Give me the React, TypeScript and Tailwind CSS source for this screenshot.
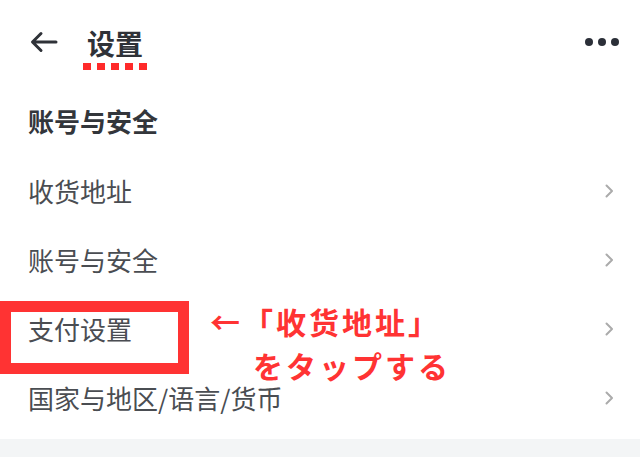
const rows = ["收货地址", "账号与安全", "支付设置", "国家与地区/语言/货币"];

function Chevron() {
  return (
    <svg width="10" height="16" viewBox="0 0 10 16" fill="none">
      <path d="M2.5 2.5l5.5 5.5-5.5 5.5" stroke="#ababab" strokeWidth="2" strokeLinecap="round" strokeLinejoin="round" />
    </svg>
  );
}

export default function App() {
  return (
    <div className="relative flex h-[457px] w-[640px] flex-col overflow-hidden bg-white font-['Noto_Sans_CJK_SC',sans-serif]">
      {/* Header */}
      <div className="flex h-[84px] shrink-0 items-center justify-between pl-[30px] pr-[21px]">
        <div className="flex items-center">
          <svg width="28" height="22" viewBox="0 0 28 22" fill="none">
            <path d="M26 11H3M11 2.5L2.5 11 11 19.5" stroke="#2f3238" strokeWidth="3" strokeLinecap="round" strokeLinejoin="round" />
          </svg>
          <div className="ml-[25px] flex flex-col items-center pt-[12px]">
            <span className="text-[28px] font-bold leading-[32px] text-[#2f3238]">设置</span>
            <div className="mt-[4px] flex gap-[6px]">
              {[0, 1, 2, 3, 4].map((i) => (
                <span key={i} className="h-[7px] w-[8px] bg-[#ff2a2a]" />
              ))}
            </div>
          </div>
        </div>
        <div className="flex gap-[5px]">
          {[0, 1, 2].map((i) => (
            <span key={i} className="h-[8px] w-[8px] rounded-full bg-[#2b2f38]" />
          ))}
        </div>
      </div>

      {/* Section title */}
      <div className="flex h-[72px] shrink-0 items-center pl-[28px]">
        <span className="text-[26px] font-bold text-[#33363b]">账号与安全</span>
      </div>

      {/* Rows */}
      <div className="flex flex-col">
        {rows.map((r) => (
          <div key={r} className="flex h-[69px] items-center justify-between pl-[28px] pr-[26px]">
            <span className="text-[26px] text-[#4a4d52]">{r}</span>
            <Chevron />
          </div>
        ))}
      </div>

      <div className="mt-auto h-[18px] bg-[#f3f5f6]" />

      {/* Annotation overlay */}
      <div className="absolute left-0 top-[301px] h-[73px] w-[189px] border-[11px] border-[#ff3333]" />
      <div className="absolute left-[210px] top-[299px] flex flex-col font-['Noto_Sans_CJK_JP',sans-serif] text-[30px] font-bold leading-[44px] tracking-[3px] text-[#ff3333]">
        <span>←「收货地址」</span>
        <span className="pl-[43px]">をタップする</span>
      </div>
    </div>
  );
}
